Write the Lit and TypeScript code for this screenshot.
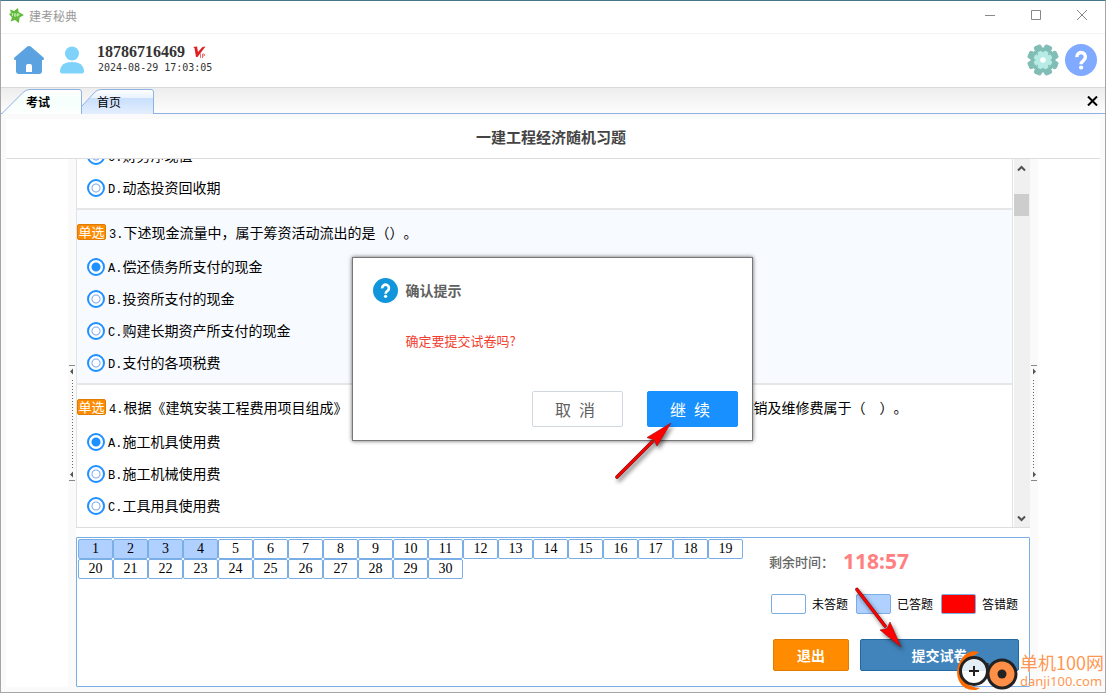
import { LitElement, html, svg, css } from "lit";
import { customElement, property } from "lit/decorators.js";
import { classMap } from "lit/directives/class-map.js";

interface Option {
  key: string;
  text: string;
}
interface Question {
  id: number;
  title?: string;
  picked?: string;
  tinted?: boolean;
  options: Option[];
}

const QUESTIONS: Question[] = [
  {
    id: 2,
    options: [
      { key: "C", text: "财务净现值" },
      { key: "D", text: "动态投资回收期" },
    ],
  },
  {
    id: 3,
    title: "下述现金流量中，属于筹资活动流出的是（）。",
    picked: "A",
    tinted: true,
    options: [
      { key: "A", text: "偿还债务所支付的现金" },
      { key: "B", text: "投资所支付的现金" },
      { key: "C", text: "购建长期资产所支付的现金" },
      { key: "D", text: "支付的各项税费" },
    ],
  },
  {
    id: 4,
    title:
      "根据《建筑安装工程费用项目组成》（按现行有关规定），工程项目施工过程中所使用的仪器仪表的摊销及维修费属于（　）。",
    picked: "A",
    options: [
      { key: "A", text: "施工机具使用费" },
      { key: "B", text: "施工机械使用费" },
      { key: "C", text: "工具用具使用费" },
      { key: "D", text: "企业管理费" },
    ],
  },
];

@customElement("exam-question")
class ExamQuestion extends LitElement {
  @property({ attribute: false }) question!: Question;

  static styles = css`
    :host {
      display: block;
      text-spacing-trim: space-all;
    }
    .block {
      margin: 0;
      padding: 0 0 4px;
      border: 0;
      border-bottom: 2px solid #e6e6e6;
      min-width: 0;
      font-size: 14px;
      color: #000;
    }
    .tinted {
      background: #f7faff;
    }
    .title {
      display: flex;
      align-items: center;
      gap: 3px;
      height: 38px;
      padding-top: 3px;
      white-space: nowrap;
    }
    .badge {
      box-sizing: border-box;
      width: 29px;
      height: 16px;
      border-radius: 2px;
      background: #ff8c00;
      border: 1px solid #e07c00;
      color: #fff;
      font-size: 13px;
      line-height: 14px;
      text-align: center;
      display: grid;
      place-content: center;
    }
    .key {
      font-family: "Liberation Mono", monospace;
      font-size: 12px;
    }
    .option {
      display: flex;
      align-items: center;
      height: 32px;
      padding-left: 10px;
      line-height: 20px;
      white-space: nowrap;
    }
    .radio {
      appearance: none;
      flex: none;
      width: 18px;
      height: 18px;
      margin: 0 3px 0 0;
      border-radius: 50%;
      border: 2px solid #1e90ff;
      background: radial-gradient(circle, #fff 0 3px, #7fa9ef 4px, #fff 5px);
    }
    .radio:checked {
      background: radial-gradient(circle, #1e90ff 0 4px, #fff 5px);
    }
  `;

  render() {
    const q = this.question;
    return html`<fieldset class=${classMap({ block: true, tinted: !!q.tinted })}>
      ${q.title
        ? html`<div class="title">
            <span class="badge">单选</span>
            <span><span class="key">${q.id}.</span>${q.title}</span>
          </div>`
        : null}
      ${q.options.map(
        (o) => html`<label class="option"
          ><input class="radio" type="radio" name="q${q.id}" .checked=${q.picked === o.key} /><span
            ><span class="key">${o.key}.</span>${o.text}</span
          ></label
        >`
      )}
    </fieldset>`;
  }
}

const gear = (cx: number, cy: number, r: number, fill: string) => {
  const pts: string[] = [];
  const step = Math.PI / 4;
  for (let i = 0; i < 8; i++) {
    const a = i * step + step / 2;
    for (const [d, k] of [
      [-0.3, 0.78],
      [-0.24, 0.96],
      [-0.16, 1],
      [0.16, 1],
      [0.24, 0.96],
      [0.3, 0.78],
    ]) {
      pts.push(`${(cx + Math.cos(a + d) * r * k).toFixed(2)},${(cy + Math.sin(a + d) * r * k).toFixed(2)}`);
    }
  }
  return svg`<polygon points=${pts.join(" ")} fill=${fill} stroke=${fill} stroke-width="1" stroke-linejoin="round"/>`;
};

const questionMark = svg`<path d="M11.800 13.200a4.300 4.300 0 1 1 7 3c-1.800 1.300-2.700 1.900-2.700 4" fill="none" stroke="#fff" stroke-width="3.400"/><circle cx="16.100" cy="23.500" r="2.100" fill="#fff"/>`;

@customElement("app-root")
class AppRoot extends LitElement {
  static styles = css`
    :host {
      display: block;
      font-family: "Noto Sans CJK SC", "Liberation Sans", sans-serif;
      font-size: 14px;
      color: #000;
    }
    * {
      box-sizing: border-box;
    }
    button {
      font-family: inherit;
      padding: 0;
      margin: 0;
      border: 0;
      background: none;
      color: inherit;
    }
    svg {
      display: block;
    }
    .window {
      position: relative;
      display: flex;
      flex-direction: column;
      height: 100vh;
      min-height: 480px;
      overflow: hidden;
      background: #fafafa;
      border: 1px solid #a6a6a6;
      border-top-color: #45788a;
    }
    .titlebar {
      display: flex;
      align-items: center;
      flex: none;
      height: 33px;
      padding: 0 15px 4px 8px;
      background: #fff;
      border-bottom: 1px solid #f2f2f2;
      font-size: 12px;
      color: #999;
      gap: 5px;
    }
    .caption {
      flex: 1;
    }
    .winbtns {
      display: flex;
      gap: 30px;
    }
    .header {
      display: flex;
      align-items: center;
      flex: none;
      height: 54px;
      padding: 0 8px 2px 12px;
      background: #fff;
      border-bottom: 1px solid #d9d9d9;
    }
    .avatar {
      margin: 0 12px 0 14px;
    }
    .user {
      flex: 1;
      color: #333;
    }
    .phone {
      display: flex;
      align-items: center;
      gap: 8px;
      font: bold 16px/16px "Liberation Serif", serif;
    }
    .stamp {
      font: 10px/15px "DejaVu Sans Mono", monospace;
      padding-left: 1px;
    }
    .tools {
      display: flex;
      align-items: center;
      gap: 6px;
    }
    .tabs {
      display: flex;
      flex: none;
      height: 26px;
      padding: 1px 7px 0 1px;
      background: linear-gradient(#ededed, #fdfdfd);
      border-bottom: 1px solid #8db2e3;
    }
    .tab {
      position: relative;
      display: block;
      height: 25px;
      font-size: 12px;
      line-height: 22px;
      text-align: left;
    }
    .tab svg {
      position: absolute;
      inset: 0;
    }
    .tab span {
      position: relative;
    }
    .exam {
      width: 80px;
      padding-left: 24px;
      font-weight: bold;
    }
    .home {
      width: 72px;
      padding-left: 15px;
    }
    .close {
      margin-left: auto;
    }
    .heading {
      flex: none;
      margin: 5px 5px 0;
      height: 40px;
      background: #fff;
      border-bottom: 1px solid #ddd;
      font-size: 15px;
      line-height: 36px;
      font-weight: bold;
      color: #444;
      text-align: center;
      padding-right: 4px;
    }
    .body {
      flex: 1;
      min-height: 0;
      display: grid;
      grid-template-columns: 62px 8px minmax(0, 1fr) 8px 62px;
      margin: 0 5px 5px;
    }
    .side {
      background: #fff;
    }
    .splitter {
      display: grid;
      place-items: center;
    }
    .main {
      display: flex;
      flex-direction: column;
      gap: 9px;
      min-height: 0;
      background: #fff;
    }
    .scroller {
      flex: 1;
      min-height: 0;
      display: flex;
      border-bottom: 1px solid #ddd;
    }
    .list {
      flex: 1;
      min-width: 0;
      overflow: hidden;
      border: solid #e3e3e3;
      border-width: 0 1px;
    }
    .bar {
      width: 17px;
      display: flex;
      flex-direction: column;
      align-items: center;
      background: #f0f0f0;
      border-left: 1px solid #fff;
      padding: 6px 1px 5px 0;
    }
    .thumb {
      width: 15px;
      height: 22px;
      margin-top: 22px;
      margin-bottom: auto;
      background: #cdcdcd;
    }
    .panel {
      flex: none;
      display: flex;
      justify-content: space-between;
      height: 150px;
      border: 1px solid #7aaee6;
      border-radius: 1px;
      padding: 1px;
      background: #fff;
    }
    .sheet {
      display: grid;
      grid-template-columns: repeat(19, 35px);
      grid-auto-rows: 20px;
    }
    .cell {
      border: 1px solid #7aaee6;
      border-radius: 2px;
      background: #fff;
      font: 14px/18px "Liberation Serif", serif;
    }
    .done {
      background: #b0d0ff;
    }
    .wrong {
      background: #f00;
    }
    .status {
      position: relative;
      flex: none;
      width: 260px;
      padding: 8px 9px 14px 0;
      display: flex;
      flex-direction: column;
    }
    .clock {
      display: flex;
      align-items: center;
      gap: 9px;
      height: 28px;
      padding-left: 1px;
      font-size: 13px;
      font-weight: 500;
      color: #666;
    }
    .time {
      font: bold 21px/28px "Noto Sans", sans-serif;
      color: #ff8080;
    }
    .legend {
      display: flex;
      gap: 8px;
      margin-top: 19px;
      padding-left: 3px;
      font-size: 12px;
    }
    .legend div {
      display: flex;
      align-items: center;
      gap: 6px;
      line-height: 20px;
      white-space: nowrap;
    }
    .swatch {
      width: 35px;
      height: 20px;
      border: 1px solid #7aaee6;
      border-radius: 2px;
    }
    .actions {
      display: flex;
      gap: 11px;
      margin-top: auto;
      padding-left: 5px;
    }
    .actions button {
      height: 32px;
      border-radius: 2px;
      font-size: 14px;
      font-weight: bold;
      color: #fff;
    }
    .actions .quit {
      width: 76px;
      background: #ff8c00;
      border: 1px solid #e07c00;
    }
    .actions .submit {
      flex: 1;
      background: #4184bb;
      border: 1px solid #22699f;
    }
    .overlay {
      position: absolute;
      inset: 0;
      display: grid;
      place-items: center;
      padding: 5px 2px 0 0;
    }
    .dialog {
      position: relative;
      width: 401px;
      height: 184px;
      display: flex;
      flex-direction: column;
      padding: 20px 14px 13px 20px;
      background: #fff;
      border: 1px solid #777;
      box-shadow: 0 0 4px rgba(0, 0, 0, 0.6);
    }
    .dialog-title {
      display: flex;
      align-items: center;
      gap: 8px;
      margin: 0;
      font-size: 14px;
      line-height: 25px;
      color: #606060;
    }
    .ask {
      margin: 28px 0 0 33px;
      font-size: 13px;
      line-height: 20px;
      color: #f23c2e;
    }
    .choices {
      margin-top: auto;
      display: flex;
      justify-content: flex-end;
      gap: 24px;
    }
    .choices button {
      display: flex;
      align-items: center;
      justify-content: center;
      gap: 8px;
      width: 91px;
      height: 36px;
      padding-right: 4px;
      border-radius: 2px;
      border: 1px solid #d0d7de;
      font-size: 16px;
      line-height: 32px;
      color: #606060;
    }
    .choices .go {
      background: #1890ff;
      border-color: #1890ff;
      color: #fff;
    }
    .pointer {
      position: absolute;
      overflow: visible;
      pointer-events: none;
      filter: drop-shadow(2px 3px 2px rgba(0, 0, 0, 0.5));
    }
    .to-go {
      left: 262px;
      top: 164px;
    }
    .to-submit {
      left: 86px;
      top: 48px;
    }
    .brand {
      position: absolute;
      right: 1px;
      bottom: 0;
      display: flex;
      align-items: center;
      gap: 1px;
      color: #ff9752;
    }
    .brand-name {
      font-size: 18px;
      line-height: 19px;
      white-space: nowrap;
    }
    .brand-url {
      font-size: 13px;
      line-height: 18px;
      font-family: "Noto Sans", sans-serif;
    }
  `;

  firstUpdated() {
    const list = this.renderRoot.querySelector<HTMLElement>(".list")!;
    const rows = [...list.querySelectorAll<LitElement>("exam-question")];
    Promise.all(rows.map((r) => r.updateComplete)).then(() => {
      list.scrollTop = 19;
    });
  }

  private splitter(flip: boolean) {
    return html`<div class="splitter">
      <svg width="8" height="116" viewBox="0 0 8 116">
        <g transform=${flip ? "translate(8 0) scale(-1 1)" : ""}>
          <path d="M1 .5h6M1 115.5h6" stroke="#888" />
          <path d="M2 6.5l3-3v6zM2 109.5l3-3v6z" fill="#555" />
          <path d="M4.5 15v88" stroke="#666" stroke-dasharray="1 2" />
        </g>
      </svg>
    </div>`;
  }

  render() {
    const cells = Array.from({ length: 30 }, (_, i) => i + 1);
    return html`<div class="window">
      <div class="titlebar">
        <svg width="15" height="15" viewBox="0 0 15 15">
          <path d="M1 1.500l4 1.500 4-3 .6 4L15 7l-4.500 2.500L10 15l-4-3-4.500 1.500L3 9.500 0 6l2-1z" fill="#62b93c" />
          <path d="M2.500 5.800h2m-1 0v2.400M5.500 5.800h1.500v2.400H5.500zM8.500 8.500V5.800H10v1.400H8.500" stroke="#d5f5c0" fill="none" stroke-width=".8" />
        </svg>
        <span class="caption">建考秘典</span>
        <div class="winbtns">
          <button aria-label="最小化">
            <svg width="16" height="12"><path d="M3 6.500h10" stroke="#888" /></svg>
          </button>
          <button aria-label="最大化">
            <svg width="16" height="12"><path d="M3.500 1.500h9v9h-9z" fill="none" stroke="#888" /></svg>
          </button>
          <button aria-label="关闭窗口">
            <svg width="16" height="12"><path d="M3 1l10 10M13 1L3 11" stroke="#888" /></svg>
          </button>
        </div>
      </div>

      <div class="header">
        <button aria-label="主页">
          <svg width="32" height="28" viewBox="0 0 32 28">
            <path d="M14 .8q2-1.500 4 0L30.500 11.500q1.500 2.500-1 2.500H29v11q0 3-3 3H6q-3 0-3-3V14h-.5q-2.500 0-1-2.500z" fill="#5ba3e0" />
            <path d="M13 26v-6q0-2 2-2h2q2 0 2 2v6z" fill="#fff" />
          </svg>
        </button>
        <svg class="avatar" width="26" height="28" viewBox="0 0 26 28">
          <circle cx="13" cy="7.500" r="7" fill="#7fd2fa" />
          <path d="M1 25.500C1 19 6 16 13 16s12 3 12 9.500q0 2-2 2H3q-2 0-2-2z" fill="#7fd2fa" />
        </svg>
        <div class="user">
          <div class="phone">
            18786716469
            <svg width="14" height="13" viewBox="0 0 14 13">
              <path d="M0 1l4-.5L5 6 9.500 1l3-.5L4.500 11H3L1.500 2z" fill="#e02020" />
              <path d="M7.500 7.500V12M9.500 12V8h1.500q1.500 1 0 2H9.500" fill="none" stroke="#e86060" stroke-width=".9" />
            </svg>
          </div>
          <div class="stamp">2024-08-29 17:03:05</div>
        </div>
        <div class="tools">
          <button aria-label="设置">
            <svg width="32" height="32" viewBox="0 0 32 32">
              ${gear(16, 16, 15.5, "#80bdb5")} ${gear(16, 16, 9, "#b6ece4")}
              <circle cx="16" cy="16" r="2.800" fill="#fff" />
            </svg>
          </button>
          <button aria-label="帮助">
            <svg width="32" height="32" viewBox="0 0 32 32">
              <circle cx="16" cy="16" r="16" fill="#80aaff" />
              ${questionMark}
            </svg>
          </button>
        </div>
      </div>

      <div class="tabs">
        <button class="tab exam">
          <svg width="80" height="25" viewBox="0 0 80 25">
            <defs>
              <linearGradient id="a" x2="0" y2="1">
                <stop offset="0" stop-color="#fff" />
                <stop offset=".4" stop-color="#f5fffc" />
                <stop offset="1" stop-color="#fcfffe" />
              </linearGradient>
            </defs>
            <path d="M0 25L21 3.500Q24 .5 28 .5H77q2.500 0 2.500 2.500V25z" fill="url(#a)" />
            <path d="M0 24.500L21 3.500Q24 .5 28 .5H77q2.500 0 2.500 2.500V25" fill="none" stroke="#8db2e3" />
          </svg>
          <span>考试</span>
        </button>
        <button class="tab home">
          <svg width="72" height="25" viewBox="0 0 72 25">
            <defs>
              <linearGradient id="b" x2="0" y2="1">
                <stop offset="0" stop-color="#fff" />
                <stop offset=".33" stop-color="#eaf3ff" />
                <stop offset=".36" stop-color="#c9dffc" />
                <stop offset="1" stop-color="#e4efff" />
              </linearGradient>
            </defs>
            <path d="M0 25V17L12 4Q15 .5 19 .5H69q2.500 0 2.500 2.500V25z" fill="url(#b)" />
            <path d="M0 17L12 4Q15 .5 19 .5H69q2.500 0 2.500 2.500V25" fill="none" stroke="#8db2e3" />
          </svg>
          <span>首页</span>
        </button>
        <button class="close" aria-label="关闭标签">
          <svg width="11" height="10" viewBox="0 0 11 10"><path d="M1 .5l9 9M10 .5l-9 9" stroke="#000" stroke-width="2" /></svg>
        </button>
      </div>

      <div class="heading">一建工程经济随机习题</div>

      <div class="body">
        <div class="side"></div>
        ${this.splitter(false)}
        <div class="main">
          <div class="scroller">
            <div class="list">${QUESTIONS.map((q) => html`<exam-question .question=${q}></exam-question>`)}</div>
            <div class="bar">
              <svg width="9" height="7"><path d="M1 5.500l3.500-3.500L8 5.500" fill="none" stroke="#505050" stroke-width="2" /></svg>
              <div class="thumb"></div>
              <svg width="9" height="7"><path d="M1 1.500L4.500 5 8 1.500" fill="none" stroke="#505050" stroke-width="2" /></svg>
            </div>
          </div>
          <div class="panel">
            <div class="sheet">
              ${cells.map((n) => html`<button class=${classMap({ cell: true, done: n <= 4 })}>${n}</button>`)}
            </div>
            <div class="status">
              <div class="clock"><span>剩余时间：</span><span class="time">118:57</span></div>
              <div class="legend">
                <div><span class="swatch"></span>未答题</div>
                <div><span class="swatch done"></span>已答题</div>
                <div><span class="swatch wrong"></span>答错题</div>
              </div>
              <div class="actions">
                <button class="quit">退出</button>
                <button class="submit">提交试卷</button>
              </div>
              <svg class="pointer to-submit" width="50" height="62" viewBox="0 0 50 62">
                <path d="M3 2.500L31 39" stroke="#801010" stroke-width="3.600" stroke-linecap="round" />
                <path d="M3 2.500L31 39" stroke="#f00" stroke-width="2.400" stroke-linecap="round" />
                <path d="M47 60L26 43l7-1.500L36 35z" fill="#f00" stroke="#901010" stroke-width=".6" />
              </svg>
            </div>
          </div>
        </div>
        ${this.splitter(true)}
        <div class="side"></div>
      </div>

      <div class="brand">
        <svg width="64" height="42" viewBox="0 0 64 42">
          <path d="M24 2Q14-1 7 8-1 20 4 31q5 10 17 9l4-2Q9 37 7 24 6 9 20 5z" fill="#ff6a00" />
          <circle cx="19" cy="21" r="13.500" fill="#fff" fill-opacity=".85" stroke="#222" stroke-width="3" />
          <path d="M19 16v10M14 21h10" stroke="#222" stroke-width="2" />
          <path d="M32 13q0 9 5 14" fill="none" stroke="#222" stroke-width="3" />
          <circle cx="47" cy="24" r="14" fill="#ff8f47" stroke="#222" stroke-width="3" />
          <circle cx="47" cy="24" r="4.500" fill="#222" />
        </svg>
        <div>
          <div class="brand-name">单机100网</div>
          <div class="brand-url">danji100.com</div>
        </div>
      </div>

      <div class="overlay">
        <div class="dialog" role="dialog" aria-labelledby="dlg">
          <h2 class="dialog-title" id="dlg">
            <svg width="25" height="25" viewBox="0 0 32 32"><circle cx="16" cy="16" r="16" fill="#1296db" />${questionMark}</svg>
            确认提示
          </h2>
          <p class="ask">确定要提交试卷吗?</p>
          <div class="choices">
            <button><span>取</span><span>消</span></button>
            <button class="go"><span>继</span><span>续</span></button>
          </div>
          <svg class="pointer to-go" width="58" height="58" viewBox="0 0 58 58">
            <path d="M2 55L37 20" stroke="#801010" stroke-width="3.600" stroke-linecap="round" />
            <path d="M2 55L37 20" stroke="#f00" stroke-width="2.400" stroke-linecap="round" />
            <path d="M56 1L42 24l-3-6-7-2.500z" fill="#f00" stroke="#901010" stroke-width=".6" />
          </svg>
        </div>
      </div>
    </div>`;
  }
}
